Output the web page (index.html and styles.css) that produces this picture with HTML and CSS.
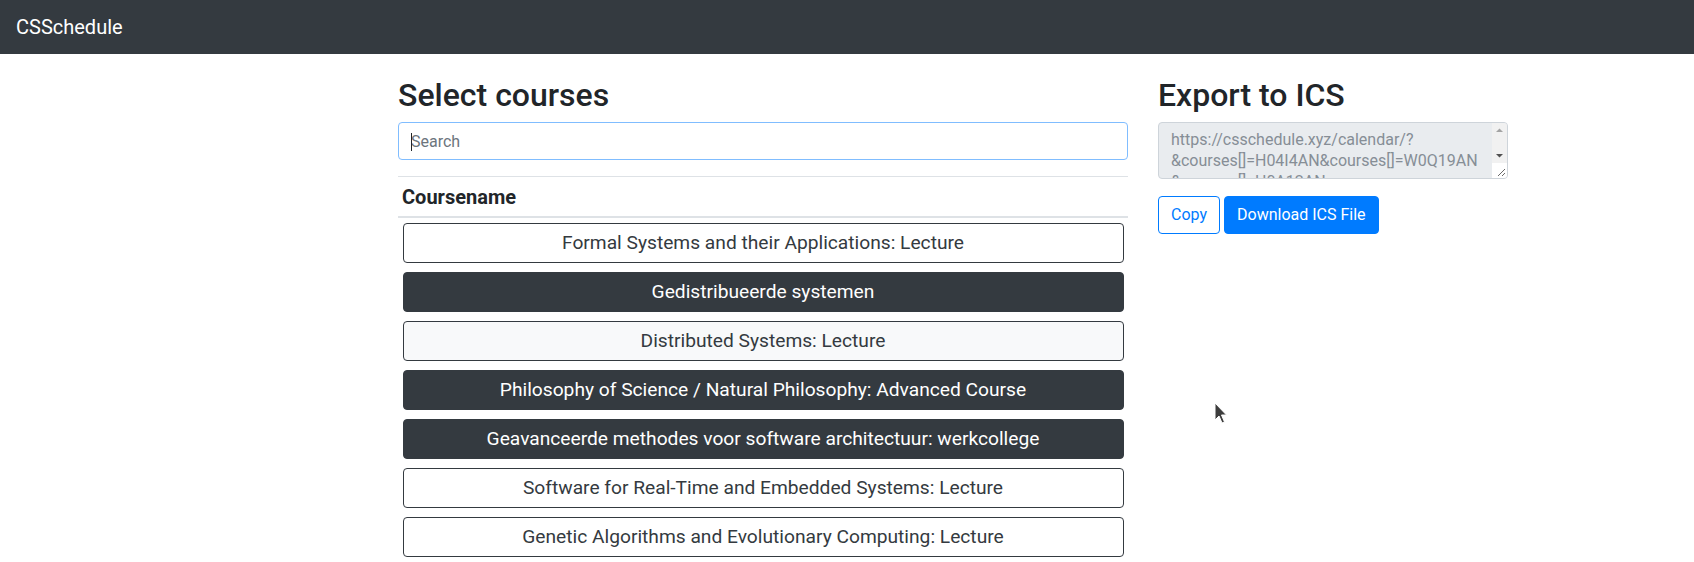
FILE: index.html
```html
<!DOCTYPE html>
<html lang="en">
<head>
<meta charset="utf-8">
<title>CSSchedule</title>
<link rel="stylesheet" href="styles.css">
</head>
<body>
<nav class="navbar">
  <a class="brand" href="#">CSSchedule</a>
</nav>
<main class="container">
  <section class="col-main">
    <h2 class="heading">Select courses</h2>
    <div class="search-wrap">
      <input class="search" type="text" placeholder="Search">
      <span class="caret"></span>
    </div>
    <table class="courses">
      <thead>
        <tr><th>Coursename</th></tr>
      </thead>
      <tbody>
        <tr><td><button class="course course-outline">Formal Systems and their Applications: Lecture</button></td></tr>
        <tr><td><button class="course course-dark">Gedistribueerde systemen</button></td></tr>
        <tr><td><button class="course course-light">Distributed Systems: Lecture</button></td></tr>
        <tr><td><button class="course course-dark">Philosophy of Science / Natural Philosophy: Advanced Course</button></td></tr>
        <tr><td><button class="course course-dark">Geavanceerde methodes voor software architectuur: werkcollege</button></td></tr>
        <tr><td><button class="course course-outline">Software for Real-Time and Embedded Systems: Lecture</button></td></tr>
        <tr><td><button class="course course-outline">Genetic Algorithms and Evolutionary Computing: Lecture</button></td></tr>
      </tbody>
    </table>
  </section>
  <section class="col-side">
    <h2 class="heading">Export to ICS</h2>
    <div class="ics-wrap">
      <textarea class="ics-url" readonly>https://csschedule.xyz/calendar/?
&amp;courses[]=H04I4AN&amp;courses[]=W0Q19AN
&amp;courses[]=H0A12AN
&amp;courses[]=H04G1AN
&amp;courses[]=G0Q57AN</textarea>
      <div class="scrollbar" aria-hidden="true">
        <div class="scroll-track">
          <svg class="arrow" width="15" height="15" viewBox="0 0 15 15"><path d="M4 9 L11 9 L7.5 5.5 Z" fill="#a3a3a3"/></svg>
          <svg class="arrow" width="15" height="15" viewBox="0 0 15 15"><path d="M4 6 L11 6 L7.5 9.5 Z" fill="#505050"/></svg>
        </div>
        <svg class="resizer" width="15" height="15" viewBox="0 0 15 15"><path d="M13 6 L6 13 M13 10 L10 13" stroke="#6a6a6a" stroke-width="1"/></svg>
      </div>
    </div>
    <div class="actions">
      <button class="btn btn-outline-primary">Copy</button>
      <button class="btn btn-primary">Download ICS File</button>
    </div>
  </section>
</main>
<svg class="pointer" width="14" height="23" viewBox="0 0 14 23" aria-hidden="true">
  <path d="M1 1 L1 18 L5 14 L8 21 L10.5 20 L7.5 13 L12.5 13 Z" fill="#3d3d3d" stroke="#ffffff" stroke-width="1" stroke-linejoin="round"/>
</svg>
</body>
</html>
```

FILE: styles.css
```css
* {
  box-sizing: border-box;
}

html, body {
  margin: 0;
  padding: 0;
}

body {
  font-family: Roboto, "Liberation Sans", sans-serif;
  font-size: 16px;
  line-height: 1.5;
  color: #212529;
  background: #ffffff;
  position: relative;
  min-height: 562px;
}

.navbar {
  height: 54px;
  background: #343a40;
  display: flex;
  align-items: center;
  padding: 0 16px;
}

.brand {
  color: #ffffff;
  font-size: 20px;
  line-height: 30px;
  text-decoration: none;
}

.container {
  width: 1140px;
  margin-left: 383px;
  margin-top: 22px;
  display: flex;
}

.col-main {
  flex: 0 0 760px;
  padding: 0 15px;
}

.col-side {
  flex: 0 0 380px;
  padding: 0 15px;
}

.heading {
  margin: 0 0 8px;
  font-size: 32px;
  font-weight: 500;
  line-height: 1.2;
}

.search-wrap {
  position: relative;
  margin-bottom: 16px;
}

.search {
  display: block;
  width: 100%;
  height: 38px;
  padding: 6px 12px;
  font-family: inherit;
  font-size: 16px;
  line-height: 24px;
  color: #495057;
  background: #ffffff;
  border: 1px solid #80bdff;
  border-radius: 4px;
  outline: none;
}

.search::placeholder {
  color: #6c757d;
}

.caret {
  position: absolute;
  left: 13px;
  top: 11px;
  width: 1px;
  height: 18px;
  background: #212529;
}

.courses {
  width: 100%;
  border-collapse: collapse;
  border-top: 1px solid #dee2e6;
}

.courses th {
  text-align: left;
  font-size: 20px;
  font-weight: 700;
  line-height: 30px;
  padding: 4.5px 4px;
  border-bottom: 2px solid #dee2e6;
}

.courses td {
  padding: 4.5px 4.5px;
}

.course {
  display: block;
  width: 100%;
  height: 40px;
  padding: 7px 12px;
  font-family: inherit;
  font-size: 19.2px;
  line-height: 24px;
  text-align: center;
  border: 1px solid #343a40;
  border-radius: 4px;
}

.course-outline {
  background: #ffffff;
  color: #343a40;
}

.course-dark {
  background: #343a40;
  color: #ffffff;
}

.course-light {
  background: #f8f9fa;
  color: #343a40;
}

.ics-wrap {
  position: relative;
  margin-bottom: 17px;
}

.ics-url {
  display: block;
  width: 100%;
  height: 57px;
  padding: 6px 27px 6px 12px;
  margin: 0;
  font-family: inherit;
  font-size: 16px;
  line-height: 21px;
  color: #868e96;
  background: #e9ecef;
  border: 1px solid #ced4da;
  border-radius: 4px;
  resize: none;
  outline: none;
  overflow: hidden;
  white-space: pre;
}

.scrollbar {
  position: absolute;
  top: 1px;
  right: 1px;
  bottom: 1px;
  width: 15px;
  display: flex;
  flex-direction: column;
}

.scroll-track {
  flex: 1;
  background: #f1f1f1;
  display: flex;
  flex-direction: column;
  justify-content: space-between;
  border-top-right-radius: 3px;
}

.arrow {
  display: block;
}

.resizer {
  display: block;
  background: #ffffff;
  border-bottom-right-radius: 3px;
}

.actions {
  display: flex;
  gap: 4px;
}

.btn {
  height: 38px;
  padding: 6px 12px;
  font-family: inherit;
  font-size: 16px;
  line-height: 24px;
  border: 1px solid #007bff;
  border-radius: 4px;
}

.btn-outline-primary {
  background: #ffffff;
  color: #007bff;
}

.btn-primary {
  background: #007bff;
  color: #ffffff;
}

.pointer {
  position: absolute;
  left: 1214px;
  top: 402px;
}
```
